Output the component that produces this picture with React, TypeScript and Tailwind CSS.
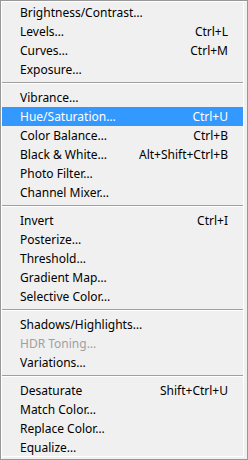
type Item = { label: string; shortcut?: string; active?: boolean; disabled?: boolean };

const GROUPS: Item[][] = [
  [
    { label: 'Brightness/Contrast…' },
    { label: 'Levels…', shortcut: 'Ctrl+L' },
    { label: 'Curves…', shortcut: 'Ctrl+M' },
    { label: 'Exposure…' },
  ],
  [
    { label: 'Vibrance…' },
    { label: 'Hue/Saturation…', shortcut: 'Ctrl+U', active: true },
    { label: 'Color Balance…', shortcut: 'Ctrl+B' },
    { label: 'Black & White…', shortcut: 'Alt+Shift+Ctrl+B' },
    { label: 'Photo Filter…' },
    { label: 'Channel Mixer…' },
  ],
  [
    { label: 'Invert', shortcut: 'Ctrl+I' },
    { label: 'Posterize…' },
    { label: 'Threshold…' },
    { label: 'Gradient Map…' },
    { label: 'Selective Color…' },
  ],
  [
    { label: 'Shadows/Highlights…' },
    { label: 'HDR Toning…', disabled: true },
    { label: 'Variations…' },
  ],
  [
    { label: 'Desaturate', shortcut: 'Shift+Ctrl+U' },
    { label: 'Match Color…' },
    { label: 'Replace Color…' },
    { label: 'Equalize…' },
  ],
];

const MenuRow = ({ item }: { item: Item }) => (
  <div
    className={
      'flex h-[19px] items-center justify-between pl-[18px] pr-[15px] ' +
      (item.active ? 'bg-[#3399ff] text-white' : item.disabled ? 'text-[#a0a0a0]' : 'text-black')
    }
  >
    <span>{item.label}</span>
    {item.shortcut && <span>{item.shortcut}</span>}
  </div>
);

export default function App() {
  return (
    <div className="h-[460px] w-[248px] border border-[#979797] bg-[#f0f0f0] font-['Noto_Sans','Open_Sans',sans-serif] text-[12px] leading-none">
      <div className="flex h-full flex-col border-l border-t border-white pt-[1px] pr-[3px] pb-[2px]">
        <div className="flex h-full flex-col border-r border-b border-white">
          {GROUPS.map((group, gi) => (
            <div key={gi}>
              {gi > 0 && (
                <div className="flex h-[9px] flex-col pt-[3px]">
                  <div className="h-px bg-[#a0a0a0]" />
                  <div className="h-px bg-white" />
                </div>
              )}
              {group.map((item) => (
                <MenuRow key={item.label} item={item} />
              ))}
            </div>
          ))}
        </div>
      </div>
    </div>
  );
}
